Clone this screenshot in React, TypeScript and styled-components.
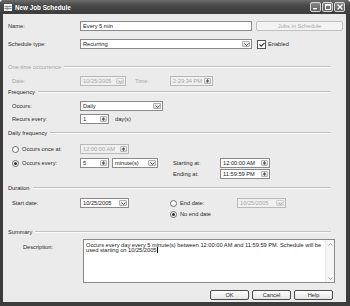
import React from 'react';
import styled, { createGlobalStyle } from 'styled-components';

const Global = createGlobalStyle`
  html, body { margin: 0; padding: 0; background: #ffffff; }
  body {
    font-family: "Liberation Sans", Arial, sans-serif;
    font-size: 5.7px;
    color: #2a2a2a;
  }
  * { box-sizing: border-box; }
`;

const Window = styled.div`
  width: 350px;
  height: 306px;
  display: flex;
  flex-direction: column;
  background: #3c3c3c;
  border-radius: 4px 4px 0 0;
  overflow: hidden;
`;

const TitleBar = styled.div`
  height: 14px;
  flex: none;
  display: flex;
  align-items: center;
  padding: 0 5px 0 4px;
  background: linear-gradient(#6c6c6c, #4a4a4a 35%, #3c3c3c);
  color: #ffffff;
  font-weight: bold;
  font-size: 6.3px;
`;

const TitleText = styled.span`
  margin-left: 3px;
  flex: 1;
`;

const CaptionButtons = styled.div`
  display: flex;
  gap: 1px;
`;

const CaptionButton = styled.div`
  width: 11px;
  height: 10px;
  border: 1px solid #d8d8d8;
  border-radius: 2px;
  background: linear-gradient(#8a8a8a, #5c5c5c);
  display: flex;
  align-items: center;
  justify-content: center;
`;

const Body = styled.div`
  flex: 1;
  margin: 0 4px 4px 3px;
  background: #ebebeb;
  padding: 7px 0 0 5px;
  display: flex;
  flex-direction: column;
`;

const Row = styled.div<{ $top: number; $indent?: number }>`
  display: flex;
  align-items: center;
  margin-top: ${p => p.$top}px;
  padding-left: ${p => p.$indent ?? 0}px;
  height: 10px;
  flex: none;
`;

const SplitRow = styled.div<{ $top: number; $indent?: number }>`
  display: flex;
  align-items: flex-start;
  margin-top: ${p => p.$top}px;
  padding-left: ${p => p.$indent ?? 0}px;
  flex: none;
`;

const Part = styled.div<{ $gap?: number; $left?: number }>`
  display: flex;
  flex-direction: column;
  gap: ${p => p.$gap ?? 0}px;
  margin-left: ${p => p.$left ?? 0}px;
`;

const Line = styled.div<{ $h?: number }>`
  display: flex;
  align-items: center;
  height: ${p => p.$h ?? 10}px;
`;

const Label = styled.span<{ $w?: number; $disabled?: boolean; $left?: number }>`
  width: ${p => (p.$w ? `${p.$w}px` : 'auto')};
  flex: none;
  margin-left: ${p => p.$left ?? 0}px;
  color: ${p => (p.$disabled ? '#a6a6a6' : '#2a2a2a')};
  white-space: nowrap;
`;

const GroupHeader = styled.div<{ $top: number; $disabled?: boolean }>`
  margin-top: ${p => p.$top}px;
  margin-right: 15px;
  height: 8px;
  flex: none;
  display: flex;
  align-items: center;
  color: ${p => (p.$disabled ? '#a6a6a6' : '#2a2a2a')};
  &::after {
    content: '';
    flex: 1;
    margin-left: 3px;
    border-top: 1px solid #c2c2c2;
    border-bottom: 1px solid #fafafa;
  }
`;

const Box = styled.div<{ $w: number; $disabled?: boolean; $left?: number }>`
  width: ${p => p.$w}px;
  height: 10px;
  flex: none;
  margin-left: ${p => p.$left ?? 0}px;
  display: flex;
  align-items: stretch;
  border: 1px solid ${p => (p.$disabled ? '#b8b8b8' : '#8a8a8a')};
  background: ${p => (p.$disabled ? '#f0f0f0' : '#ffffff')};
  color: ${p => (p.$disabled ? '#a6a6a6' : '#1a1a1a')};
`;

const BoxText = styled.span`
  flex: 1;
  padding-left: 2px;
  display: flex;
  align-items: center;
  white-space: nowrap;
  overflow: hidden;
`;

const DropBtn = styled.span<{ $disabled?: boolean }>`
  width: 8px;
  margin: 1px;
  display: flex;
  align-items: center;
  justify-content: center;
  background: linear-gradient(#f4f4f4, #d6d6d6);
  border: 1px solid ${p => (p.$disabled ? '#d0d0d0' : '#b0b0b0')};
  border-radius: 1px;
`;

const SpinBtn = styled.span`
  width: 7px;
  margin: 1px;
  display: flex;
  flex-direction: column;
  align-items: center;
  justify-content: space-around;
  background: linear-gradient(#f4f4f4, #d8d8d8);
  border: 1px solid #b8b8b8;
  border-radius: 1px;
`;

const RadioCircle = styled.span<{ $checked?: boolean }>`
  width: 7px;
  height: 7px;
  flex: none;
  border: 1px solid #6e6e6e;
  border-radius: 50%;
  background: #ffffff;
  margin-right: 3px;
  display: flex;
  align-items: center;
  justify-content: center;
  &::after {
    content: '';
    width: 3px;
    height: 3px;
    border-radius: 50%;
    background: ${p => (p.$checked ? '#333333' : 'transparent')};
  }
`;

const RadioLabel = styled.span<{ $w?: number }>`
  width: ${p => (p.$w ? `${p.$w}px` : 'auto')};
  flex: none;
  display: flex;
  align-items: center;
  white-space: nowrap;
`;

const CheckBox = styled.span`
  width: 9px;
  height: 9px;
  flex: none;
  margin: 0 2px 0 5px;
  border: 1px solid #555555;
  background: #ffffff;
  display: flex;
  align-items: center;
  justify-content: center;
`;

const Button = styled.button<{ $w: number; $disabled?: boolean }>`
  width: ${p => p.$w}px;
  height: 10px;
  flex: none;
  padding: 0;
  margin: 0;
  font-family: inherit;
  font-size: 5.7px;
  border-radius: 2px;
  border: 1px solid ${p => (p.$disabled ? '#c0c0c0' : '#4a4a4a')};
  background: ${p => (p.$disabled ? '#f3f3f3' : 'linear-gradient(#ffffff, #e4e4e4)')};
  color: ${p => (p.$disabled ? '#a8a8a8' : '#2a2a2a')};
  display: flex;
  align-items: center;
  justify-content: center;
`;

const ButtonBar = styled.div`
  margin-top: 7px;
  margin-right: 13px;
  display: flex;
  justify-content: flex-end;
  gap: 3px;
`;

const DescRow = styled.div`
  margin-top: 3px;
  display: flex;
  align-items: flex-start;
  padding-left: 15px;
`;

const DescLabel = styled.span`
  width: 60px;
  flex: none;
  margin-top: 5px;
`;

const TextArea = styled.div`
  width: 252px;
  height: 44px;
  border: 1px solid #8a8a8a;
  background: #ffffff;
  display: flex;
`;

const TextContent = styled.div`
  flex: 1;
  padding: 3px 2px 0 2px;
  line-height: 5.4px;
  color: #1a1a1a;
`;

const Caret = styled.span`
  border-left: 1px solid #000;
  margin-left: 0.5px;
`;

const ScrollBar = styled.div`
  width: 9px;
  display: flex;
  flex-direction: column;
  justify-content: space-between;
  background: #f6f6f6;
  border-left: 1px solid #ececec;
`;

const ScrollArrow = styled.span`
  height: 8px;
  display: flex;
  align-items: center;
  justify-content: center;
`;

const Chevron = ({ up, color = '#555' }: { up?: boolean; color?: string }) => (
  <svg width="5" height="3" viewBox="0 0 5 3">
    <path d={up ? 'M0.5 2.5 L2.5 0.5 L4.5 2.5' : 'M0.5 0.5 L2.5 2.5 L4.5 0.5'} stroke={color} strokeWidth="1" fill="none" />
  </svg>
);

const Tri = ({ up }: { up?: boolean }) => (
  <svg width="3" height="2" viewBox="0 0 3 2">
    <path d={up ? 'M0 2 L1.5 0 L3 2 Z' : 'M0 0 L1.5 2 L3 0 Z'} fill="#555" />
  </svg>
);

const Combo = ({ w, text, disabled, left }: { w: number; text: string; disabled?: boolean; left?: number }) => (
  <Box $w={w} $disabled={disabled} $left={left}>
    <BoxText>{text}</BoxText>
    <DropBtn $disabled={disabled}>
      <Chevron color={disabled ? '#aaa' : '#555'} />
    </DropBtn>
  </Box>
);

const Spin = ({ w, text, disabled, left }: { w: number; text: string; disabled?: boolean; left?: number }) => (
  <Box $w={w} $disabled={disabled} $left={left}>
    <BoxText>{text}</BoxText>
    <SpinBtn>
      <Tri up />
      <Tri />
    </SpinBtn>
  </Box>
);

const Radio = ({ checked, label, w }: { checked?: boolean; label: string; w?: number }) => (
  <RadioLabel $w={w}>
    <RadioCircle $checked={checked} />
    {label}
  </RadioLabel>
);

const TableIcon = () => (
  <svg width="8" height="7" viewBox="0 0 8 7">
    <rect x="0.5" y="0.5" width="7" height="6" fill="#e8e8e8" stroke="#ffffff" strokeWidth="1" />
    <path d="M0.5 2.5 H7.5 M0.5 4.5 H7.5 M3 2.5 V6.5" stroke="#777" strokeWidth="0.8" />
  </svg>
);

export default function App() {
  return (
    <>
      <Global />
      <Window>
        <TitleBar>
          <TableIcon />
          <TitleText>New Job Schedule</TitleText>
          <CaptionButtons>
            <CaptionButton>
              <svg width="5" height="6" viewBox="0 0 5 6"><rect x="0" y="4" width="4" height="1.4" fill="#fff" /></svg>
            </CaptionButton>
            <CaptionButton>
              <svg width="6" height="6" viewBox="0 0 6 6"><rect x="0.5" y="0.5" width="5" height="5" fill="none" stroke="#fff" strokeWidth="1" /><rect x="0.5" y="0.5" width="5" height="1.3" fill="#fff" /></svg>
            </CaptionButton>
            <CaptionButton>
              <svg width="6" height="6" viewBox="0 0 6 6"><path d="M0.5 0.5 L5.5 5.5 M5.5 0.5 L0.5 5.5" stroke="#fff" strokeWidth="1.3" /></svg>
            </CaptionButton>
          </CaptionButtons>
        </TitleBar>
        <Body>
          <Row $top={0}>
            <Label $w={72}>Name:</Label>
            <Box $w={172}><BoxText>Every 5 min</BoxText></Box>
            <Button $w={87} $disabled style={{ marginLeft: 4 }}>Jobs in Schedule</Button>
          </Row>
          <Row $top={8}>
            <Label $w={72}>Schedule type:</Label>
            <Combo w={172} text="Recurring" />
            <CheckBox>
              <svg width="6" height="5" viewBox="0 0 6 5"><path d="M0.5 2.5 L2.2 4.2 L5.5 0.8" stroke="#333" strokeWidth="1.1" fill="none" /></svg>
            </CheckBox>
            <Label>Enabled</Label>
          </Row>

          <GroupHeader $top={14} $disabled>One-time occurrence</GroupHeader>
          <Row $top={5} $indent={4}>
            <Label $w={68} $disabled>Date:</Label>
            <Combo w={46} text="10/25/2005" disabled />
            <Label $w={35} $left={9} $disabled>Time:</Label>
            <Spin w={43} text="2:29:34 PM" disabled />
          </Row>

          <GroupHeader $top={2}>Frequency</GroupHeader>
          <Row $top={5} $indent={4}>
            <Label $w={68}>Occurs:</Label>
            <Combo w={83} text="Daily" />
          </Row>
          <Row $top={3} $indent={4}>
            <Label $w={68}>Recurs every:</Label>
            <Spin w={29} text="1" />
            <Label $left={6}>day(s)</Label>
          </Row>

          <GroupHeader $top={5}>Daily frequency</GroupHeader>
          <Row $top={7} $indent={4}>
            <Radio label="Occurs once at:" w={68} />
            <Spin w={49} text="12:00:00 AM" disabled />
          </Row>
          <SplitRow $top={4} $indent={4}>
            <Line>
              <Radio checked label="Occurs every:" w={68} />
              <Spin w={29} text="5" />
              <Combo w={46} text="minute(s)" left={3} />
            </Line>
            <Part $gap={1} $left={15}>
              <Line>
                <Label $w={47}>Starting at:</Label>
                <Spin w={50} text="12:00:00 AM" />
              </Line>
              <Line>
                <Label $w={47}>Ending at:</Label>
                <Spin w={50} text="11:59:59 PM" />
              </Line>
            </Part>
          </SplitRow>

          <GroupHeader $top={5}>Duration</GroupHeader>
          <SplitRow $top={6} $indent={4}>
            <Line>
              <Label $w={68}>Start date:</Label>
              <Combo w={49} text="10/25/2005" />
            </Line>
            <Part $gap={2} $left={41}>
              <Line>
                <Radio label="End date:" w={67} />
                <Combo w={49} text="10/25/2005" disabled />
              </Line>
              <Line $h={8}>
                <Radio checked label="No end date" />
              </Line>
            </Part>
          </SplitRow>

          <GroupHeader $top={10}>Summary</GroupHeader>
          <DescRow>
            <DescLabel>Description:</DescLabel>
            <TextArea>
              <TextContent>
                Occurs every day every 5 minute(s) between 12:00:00 AM and 11:59:59 PM. Schedule will be used starting on 10/25/2005<Caret />
              </TextContent>
              <ScrollBar>
                <ScrollArrow><Chevron up color="#aaa" /></ScrollArrow>
                <ScrollArrow><Chevron color="#aaa" /></ScrollArrow>
              </ScrollBar>
            </TextArea>
          </DescRow>

          <ButtonBar>
            <Button $w={39}>OK</Button>
            <Button $w={39}>Cancel</Button>
            <Button $w={39}>Help</Button>
          </ButtonBar>
        </Body>
      </Window>
    </>
  );
}
